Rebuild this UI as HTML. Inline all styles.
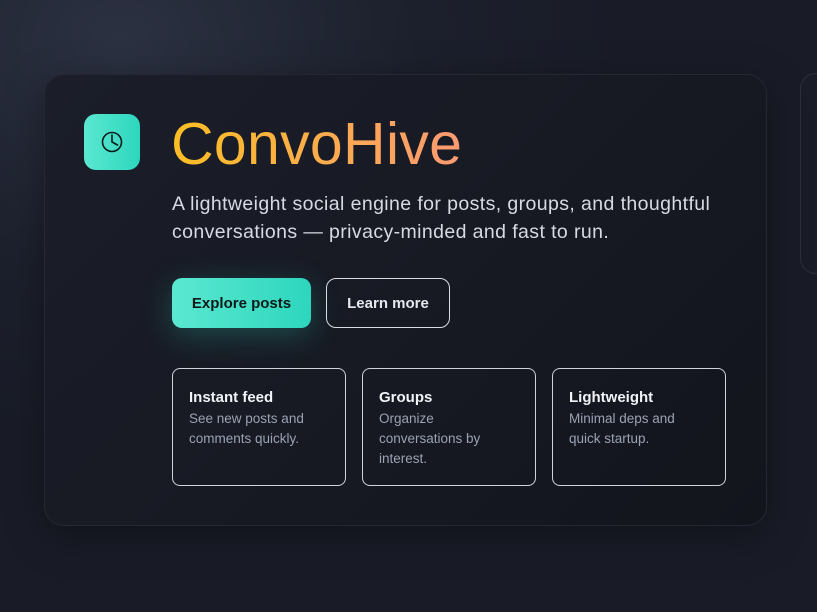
<!DOCTYPE html>
<html><head><meta charset="utf-8"><style>
*{box-sizing:border-box;margin:0;padding:0}
body{width:817px;height:612px;overflow:hidden;font-family:"Liberation Sans",sans-serif;
background:radial-gradient(ellipse 500px 400px at 120px 40px,#2c3142 0%,#1c202c 60%,#191c27 100%);position:relative}
.card{position:absolute;left:44px;top:74px;width:723px;height:452px;border-radius:20px;
background:linear-gradient(135deg,#1b1e29,#13151d);border:1px solid #252833;box-shadow:0 10px 40px rgba(0,0,0,.35)}
.card2{position:absolute;left:800px;top:73px;width:60px;height:201px;border-radius:16px;border:1px solid #2c303b;background:#1a1d27}
.icon{position:absolute;left:84px;top:114px;width:56px;height:56px;border-radius:12px;background:linear-gradient(90deg,#5be8d1,#2dd6bd)}
.title{position:absolute;left:171px;top:104px;font-size:59px;font-weight:500;letter-spacing:0.3px;
background:linear-gradient(90deg,#fbbf24,#fb9a72);-webkit-background-clip:text;color:transparent;line-height:80px}
.sub{position:absolute;left:172px;top:190px;font-size:19.5px;line-height:28px;color:#d6dae3;width:580px;letter-spacing:0.4px}
.btn{position:absolute;top:278px;height:50px;border-radius:10px;font-size:15px;font-weight:bold;display:flex;align-items:center;justify-content:center}
.b1{left:172px;width:139px;background:linear-gradient(90deg,#5be8d1,#2dd6bd);color:#0d1a18;box-shadow:0 8px 30px rgba(45,214,189,.25)}
.b2{left:326px;width:124px;border:1px solid #d8dbe2;color:#e6e8ee}
.f{position:absolute;top:368px;width:174px;height:118px;border:1px solid #cfd3db;border-radius:8px;padding:20px 16px}
.f h3{font-size:15px;color:#f1f3f6;font-weight:bold;margin-bottom:3px}
.f p{font-size:13.5px;line-height:20px;color:#9aa2b3}
</style></head><body>
<div class="card2"></div>
<div class="card"></div>
<div class="icon"><svg width="56" height="56" viewBox="0 0 56 56"><circle cx="28" cy="28" r="9.5" fill="none" stroke="#0d1a18" stroke-width="1.6"/><path d="M28 21v7l5.5 3" fill="none" stroke="#0d1a18" stroke-width="1.6" stroke-linecap="round"/></svg></div>
<div class="title">ConvoHive</div>
<div class="sub">A lightweight social engine for posts, groups, and thoughtful conversations — privacy-minded and fast to run.</div>
<div class="btn b1">Explore posts</div>
<div class="btn b2">Learn more</div>
<div class="f" style="left:172px"><h3>Instant feed</h3><p>See new posts and comments quickly.</p></div>
<div class="f" style="left:362px"><h3>Groups</h3><p>Organize conversations by interest.</p></div>
<div class="f" style="left:552px"><h3>Lightweight</h3><p>Minimal deps and quick startup.</p></div>
</body></html>
